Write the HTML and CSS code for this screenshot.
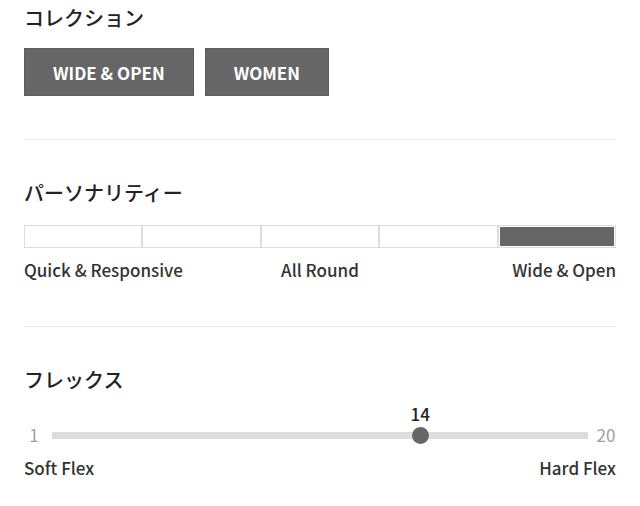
FILE: index.html
```html
<!DOCTYPE html>
<html lang="ja">
<head>
    <meta charset="UTF-8">
    <meta name="viewport" content="width=device-width, initial-scale=1.0">
    <title>Filter</title>
    <link rel="stylesheet" href="styles.css">
</head>
<body>
    <div class="panel">
        <!-- Collection -->
        <section class="section section-first">
            <h3 class="section-title">コレクション</h3>
            <div class="tag-list">
                <button class="tag">WIDE &amp; OPEN</button>
                <button class="tag">WOMEN</button>
            </div>
        </section>

        <!-- Personality -->
        <section class="section">
            <h3 class="section-title">パーソナリティー</h3>
            <div class="scale">
                <div class="scale-cell"></div>
                <div class="scale-cell"></div>
                <div class="scale-cell"></div>
                <div class="scale-cell"></div>
                <div class="scale-cell active"></div>
            </div>
            <div class="scale-labels">
                <span class="label-left">Quick &amp; Responsive</span>
                <span class="label-mid">All Round</span>
                <span class="label-right">Wide &amp; Open</span>
            </div>
        </section>

        <!-- Flex -->
        <section class="section section-last">
            <h3 class="section-title">フレックス</h3>
            <div class="slider">
                <span class="slider-num">1</span>
                <div class="slider-track" style="--pos: 68.7%">
                    <span class="slider-value">14</span>
                    <span class="slider-thumb"></span>
                </div>
                <span class="slider-num">20</span>
            </div>
            <div class="flex-labels">
                <span>Soft Flex</span>
                <span>Hard Flex</span>
            </div>
        </section>
    </div>
</body>
</html>
```

FILE: styles.css
```css
* {
    box-sizing: border-box;
    margin: 0;
    padding: 0;
}

body {
    font-family: "Noto Sans CJK JP", "Noto Sans", sans-serif;
    background-color: #ffffff;
    color: #222;
}

.panel {
    padding: 0 24px;
}

/* Sections */
.section {
    padding: 39px 0 44px;
    border-bottom: 1px solid #e6e6e6;
}

.section-first {
    padding-top: 4px;
    padding-bottom: 43px;
}

.section-last {
    border-bottom: none;
    padding-bottom: 20px;
}

.section-title {
    font-size: 20px;
    font-weight: 500;
    line-height: 28px;
    color: #222;
}

/* Collection tags */
.tag-list {
    display: flex;
    gap: 11px;
    margin-top: 16px;
}

.tag {
    height: 48px;
    padding: 0 28px;
    font-family: inherit;
    font-size: 17px;
    font-weight: 700;
    color: #ffffff;
    background-color: #666666;
    border: 1px solid #5c5c5c;
    cursor: pointer;
}

/* Personality scale */
.scale {
    display: flex;
    margin-top: 18px;
    height: 23px;
}

.scale-cell {
    flex: 1;
    border: 1px solid #dddddd;
    background-color: #ffffff;
}

.scale-cell.active {
    background-color: #666666;
    box-shadow: inset 0 0 0 1px #ffffff;
}

.scale-labels {
    display: grid;
    grid-template-columns: 1fr auto 1fr;
    margin-top: 10px;
    font-size: 17px;
    font-weight: 500;
    line-height: 24px;
    color: #333;
}

.label-mid {
    text-align: center;
}

.label-right {
    text-align: right;
}

/* Flex slider */
.slider {
    display: grid;
    grid-template-columns: 20px 1fr 20px;
    column-gap: 8px;
    align-items: center;
    margin-top: 32px;
    height: 18px;
}

.slider-num {
    font-size: 17px;
    line-height: 18px;
    color: #a0a0a0;
    text-align: center;
}

.slider-track {
    position: relative;
    height: 7px;
    background-color: #dddddd;
}

.slider-thumb {
    position: absolute;
    left: var(--pos);
    top: 50%;
    width: 17px;
    height: 17px;
    margin: -8.5px 0 0 -8.5px;
    border-radius: 50%;
    background-color: #666666;
}

.slider-value {
    position: absolute;
    left: var(--pos);
    bottom: 15px;
    transform: translateX(-50%);
    font-size: 17px;
    font-weight: 500;
    line-height: 20px;
    color: #222;
}

.flex-labels {
    display: flex;
    justify-content: space-between;
    margin-top: 12px;
    font-size: 17px;
    font-weight: 500;
    line-height: 24px;
    color: #333;
}
```
